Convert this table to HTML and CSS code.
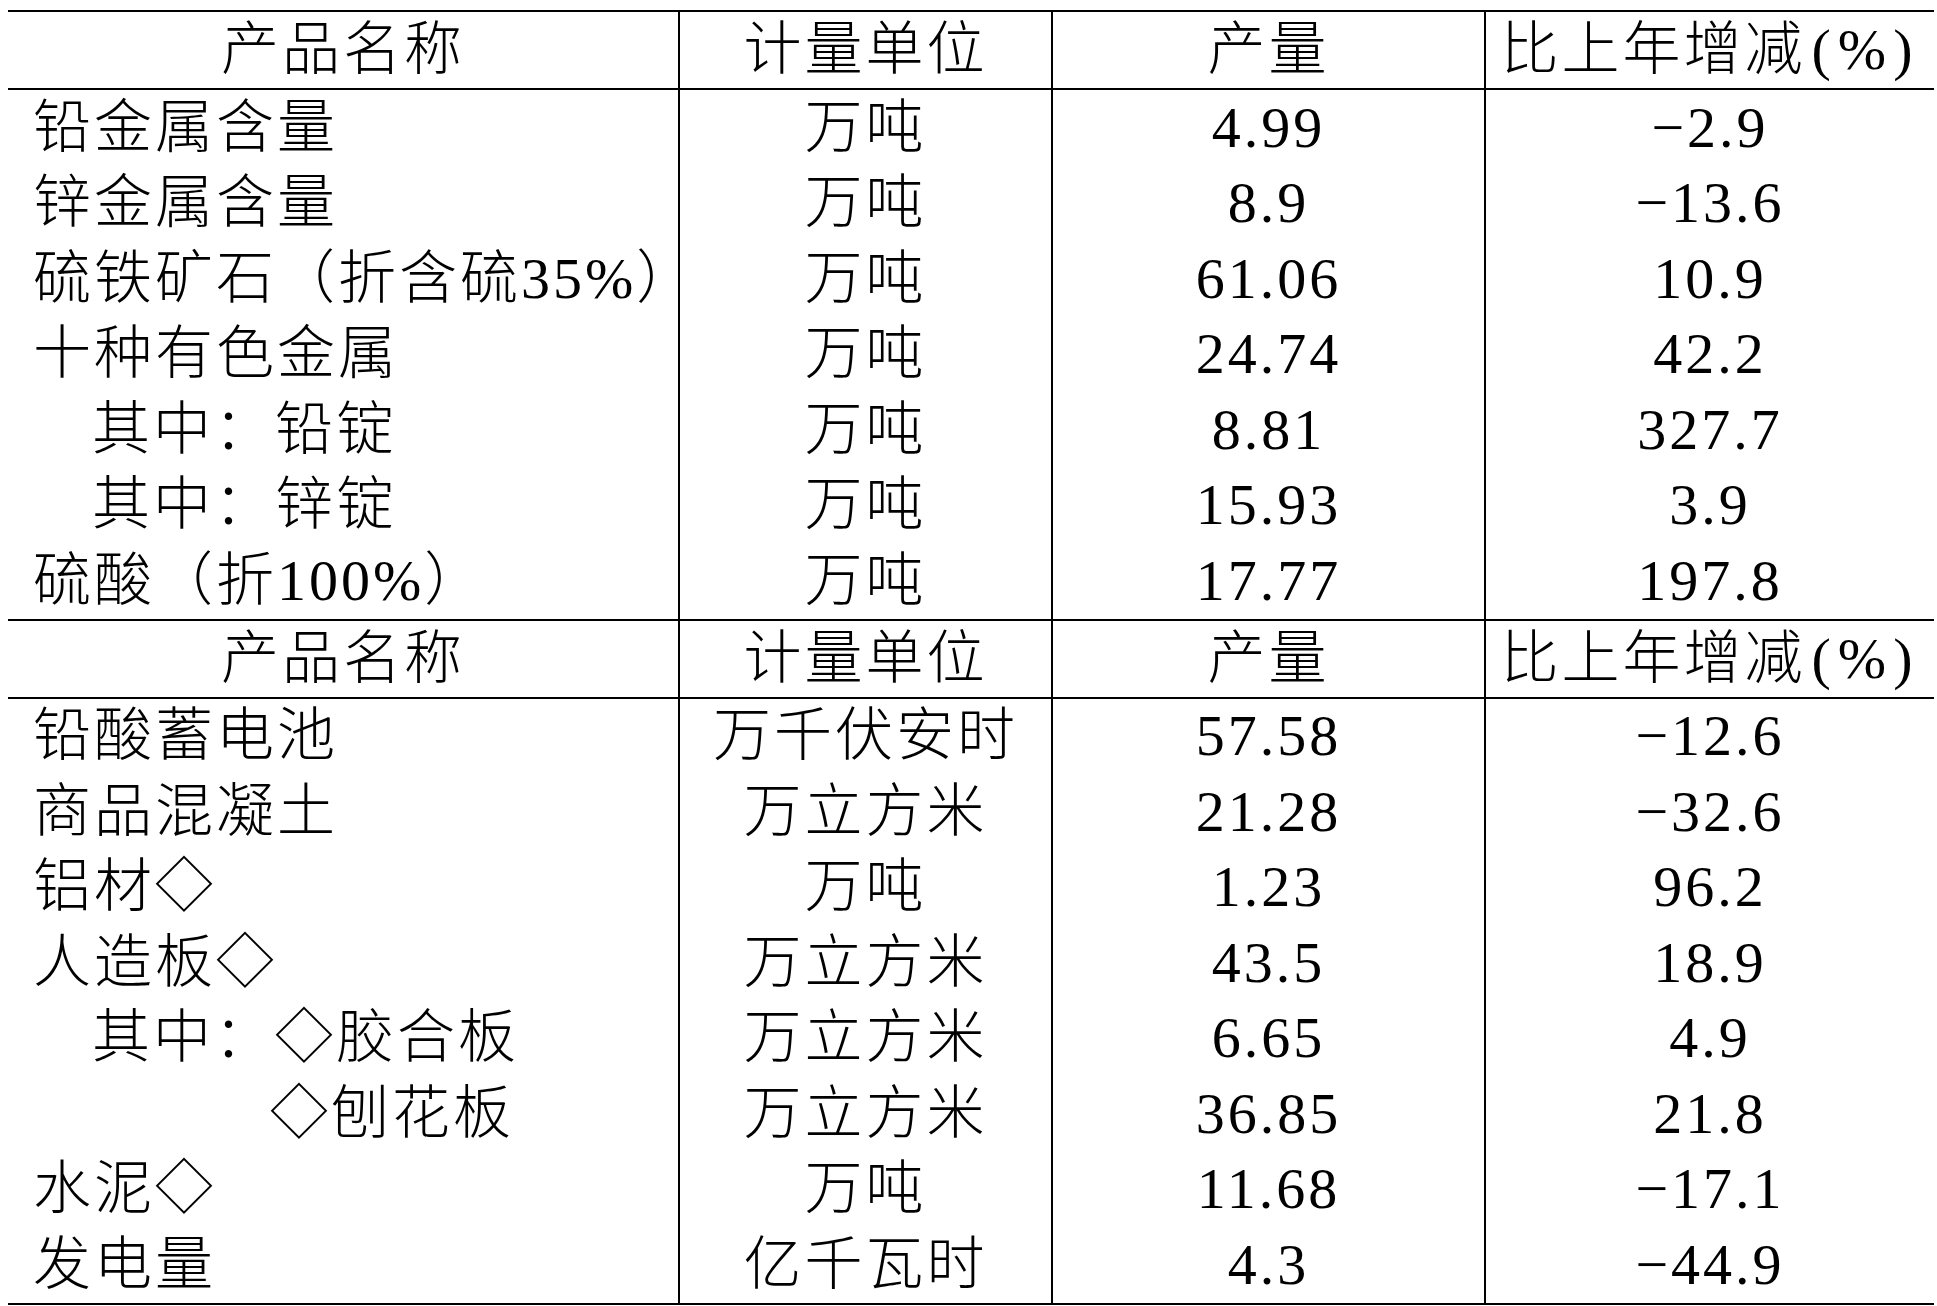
FILE: index.html
```html
<!DOCTYPE html>
<html lang="zh-CN">
<head>
<meta charset="utf-8">
<title>主要工业产品产量</title>
<link rel="stylesheet" href="styles.css">
</head>
<body>
<div class="table">
  <div class="row hdr first">
    <div class="c">产品名称</div>
    <div class="c">计量单位</div>
    <div class="c">产量</div>
    <div class="c">比上年增减<span class="paren">(%)</span></div>
  </div>
  <div class="row"><div class="n">铅金属含量</div><div class="c">万吨</div><div class="c num">4.99</div><div class="c num">−2.9</div></div>
  <div class="row"><div class="n">锌金属含量</div><div class="c">万吨</div><div class="c num">8.9</div><div class="c num">−13.6</div></div>
  <div class="row"><div class="n">硫铁矿石（折含硫35%）</div><div class="c">万吨</div><div class="c num">61.06</div><div class="c num">10.9</div></div>
  <div class="row"><div class="n">十种有色金属</div><div class="c">万吨</div><div class="c num">24.74</div><div class="c num">42.2</div></div>
  <div class="row"><div class="n ind1">其中：铅锭</div><div class="c">万吨</div><div class="c num">8.81</div><div class="c num">327.7</div></div>
  <div class="row"><div class="n ind1">其中：锌锭</div><div class="c">万吨</div><div class="c num">15.93</div><div class="c num">3.9</div></div>
  <div class="row"><div class="n">硫酸（折100%）</div><div class="c">万吨</div><div class="c num">17.77</div><div class="c num">197.8</div></div>
  <div class="row hdr">
    <div class="c">产品名称</div>
    <div class="c">计量单位</div>
    <div class="c">产量</div>
    <div class="c">比上年增减<span class="paren">(%)</span></div>
  </div>
  <div class="row"><div class="n">铅酸蓄电池</div><div class="c">万千伏安时</div><div class="c num">57.58</div><div class="c num">−12.6</div></div>
  <div class="row"><div class="n">商品混凝土</div><div class="c">万立方米</div><div class="c num">21.28</div><div class="c num">−32.6</div></div>
  <div class="row"><div class="n">铝材◇</div><div class="c">万吨</div><div class="c num">1.23</div><div class="c num">96.2</div></div>
  <div class="row"><div class="n">人造板◇</div><div class="c">万立方米</div><div class="c num">43.5</div><div class="c num">18.9</div></div>
  <div class="row"><div class="n ind1">其中：◇胶合板</div><div class="c">万立方米</div><div class="c num">6.65</div><div class="c num">4.9</div></div>
  <div class="row"><div class="n ind4">◇刨花板</div><div class="c">万立方米</div><div class="c num">36.85</div><div class="c num">21.8</div></div>
  <div class="row"><div class="n">水泥◇</div><div class="c">万吨</div><div class="c num">11.68</div><div class="c num">−17.1</div></div>
  <div class="row last"><div class="n">发电量</div><div class="c">亿千瓦时</div><div class="c num">4.3</div><div class="c num">−44.9</div></div>
</div>
</body>
</html>
```
FILE: styles.css
```css
html, body {
  margin: 0;
  padding: 0;
  background: #ffffff;
}

body {
  font-family: "Liberation Serif", "Noto Sans CJK SC", serif;
  font-size: 58px;
  font-weight: 300;
  letter-spacing: 3px;
  line-height: 1;
  color: #000000;
}

.table {
  width: 1926px;
  margin: 10px 0 0 8px;
}

.row {
  display: grid;
  grid-template-columns: 670px 373px 433px 450px;
  height: 75.5px;
}

.row.hdr {
  box-sizing: border-box;
  height: 80px;
  border-top: 2px solid #000;
  border-bottom: 2px solid #000;
}

.row.last {
  box-sizing: content-box;
  border-bottom: 2px solid #000;
}

.row > div {
  display: flex;
  align-items: center;
  white-space: nowrap;
  overflow: visible;
}

.row > div + div {
  border-left: 2px solid #000;
}

.c {
  justify-content: center;
}

.n {
  justify-content: flex-start;
  padding-left: 25px;
}

.n.ind1 {
  padding-left: 84px;
}

.n.ind4 {
  padding-left: 262px;
}

.paren {
  margin-left: 6px;
  letter-spacing: 7px;
}
```
